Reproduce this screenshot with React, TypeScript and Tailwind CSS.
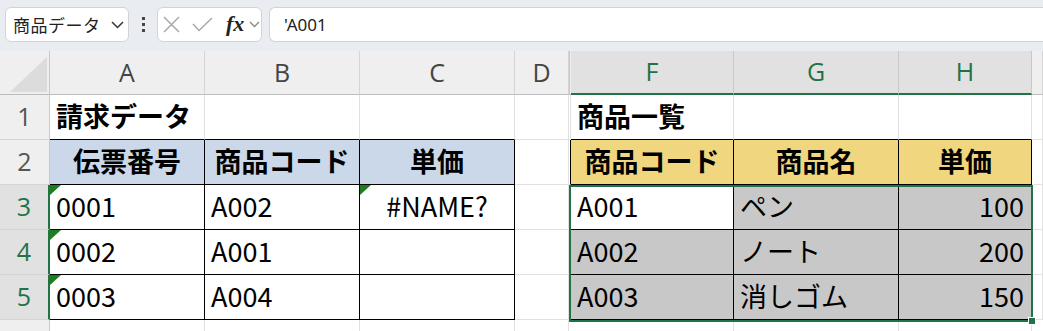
import type { ReactNode } from "react";

// one spreadsheet cell
function Cell({ className = "", children, tri }: { className?: string; children?: ReactNode; tri?: boolean }) {
  return (
    <div
      className={
        "relative flex items-center box-border border-r border-b px-[6px] pb-[4px] leading-[39px] text-[27px] text-black whitespace-nowrap overflow-hidden " +
        className
      }
    >
      {tri && (
        <svg className="absolute left-0 top-0" width="11" height="10" viewBox="0 0 11 10">
          <polygon points="0,0 11,0 0,10" fill="#1f7d1f" />
        </svg>
      )}
      {children}
    </div>
  );
}

// thin filler cells (hidden column E and the cut-off column on the right)
function Thin({ className = "" }: { className?: string }) {
  return <div className={"box-border border-r border-b " + className} />;
}

function ColHead({ label, sel, className = "" }: { label?: string; sel?: boolean; className?: string }) {
  return (
    <div
      className={
        "flex items-center justify-center box-border font-['Open_Sans',sans-serif] text-[25px] " +
        (sel
          ? "bg-[#e1e1e1] text-[#217346] border-r border-r-[#c8c8c8] border-b-2 border-b-[#217346] "
          : "bg-[#efefef] text-[#444] border-r border-r-[#d4d4d4] border-b border-b-[#bdbdbd] ") +
        className
      }
    >
      {label}
    </div>
  );
}

function RowHead({ label, sel }: { label?: string; sel?: boolean }) {
  return (
    <div
      className={
        "flex items-center justify-center box-border border-b border-b-[#d4d4d4] font-['Open_Sans',sans-serif] text-[25px] " +
        (sel
          ? "bg-[#e1e1e1] text-[#217346] border-r-2 border-r-[#217346]"
          : "bg-[#efefef] text-[#555] border-r border-r-[#c8c8c8]")
      }
    >
      {label}
    </div>
  );
}

const grid = "border-r-[#e1e1e1] border-b-[#e1e1e1]";
const blk = "border-r-black border-b-black";

export default function App() {
  return (
    <div className="w-[1043px] h-[331px] overflow-hidden bg-white font-['Noto_Sans_CJK_JP',sans-serif]">
      {/* Toolbar */}
      <div className="h-[51px] bg-[#e9ecf0] flex items-start pt-[7px]">
        <div className="ml-[5px] w-[124px] h-[35px] bg-white border border-[#d3d3d3] rounded-[6px] flex items-center justify-between pl-[7px] pr-[4px]">
          <span className="text-[17px] text-[#222] tracking-[0.5px]">商品データ</span>
          <svg width="13" height="8" viewBox="0 0 13 8">
            <polyline points="1,1 6.5,6.5 12,1" fill="none" stroke="#333" strokeWidth="1.5" />
          </svg>
        </div>
        <div className="w-[28px] h-[35px] flex flex-col items-center justify-center gap-[3px]">
          <div className="w-[3px] h-[3px] bg-[#444]" />
          <div className="w-[3px] h-[3px] bg-[#444]" />
          <div className="w-[3px] h-[3px] bg-[#444]" />
        </div>
        <div className="w-[105px] h-[35px] bg-white border border-[#d3d3d3] rounded-[6px] flex items-center pl-[5px]">
          <svg width="17" height="17" viewBox="0 0 17 17">
            <path d="M1 1 L16 16 M16 1 L1 16" stroke="#a9a9a9" strokeWidth="1.5" fill="none" />
          </svg>
          <svg className="ml-[12px]" width="21" height="15" viewBox="0 0 21 15">
            <polyline points="1,7 7,13.5 20,1" fill="none" stroke="#a9a9a9" strokeWidth="1.5" />
          </svg>
          <span className="ml-[13px] font-['Liberation_Serif',serif] italic font-bold text-[22px] leading-none text-[#222] pb-[2px]">fx</span>
          <svg className="ml-[5px]" width="11" height="7" viewBox="0 0 11 7">
            <polyline points="1,1 5.5,5.5 10,1" fill="none" stroke="#888" strokeWidth="1.3" />
          </svg>
        </div>
        <div className="ml-[7px] flex-1 h-[35px] bg-white border border-r-0 border-[#d3d3d3] rounded-l-[6px] flex items-center pl-[14px]">
          <span className="font-['Noto_Sans',sans-serif] text-[17px] text-[#222]">'A001</span>
        </div>
      </div>

      {/* Sheet */}
      <div className="relative grid grid-cols-[50px_155px_155px_155px_54px_2px_163px_165px_133px_11px] grid-rows-[44px_45px_45px_45px_45px_45px_11px]">
        {/* header row */}
        <div className="relative box-border bg-[#efefef] border-r border-r-[#c8c8c8] border-b border-b-[#bdbdbd]">
          <svg className="absolute left-[10px] top-[6px]" width="37" height="35" viewBox="0 0 37 35">
            <polygon points="0,35 37,35 37,0" fill="#dcdcdc" />
          </svg>
        </div>
        <ColHead label="A" />
        <ColHead label="B" />
        <ColHead label="C" />
        <ColHead label="D" />
        <div className="box-border bg-[#efefef] border-l border-l-[#c8c8c8] border-b border-b-[#bdbdbd]" />
        <ColHead label="F" sel />
        <ColHead label="G" sel />
        <ColHead label="H" sel />
        <ColHead />

        {/* row 1 */}
        <RowHead label="1" />
        <Cell className="font-bold border-r-[#e1e1e1] border-b-black">請求データ</Cell>
        <Cell className="border-r-[#e1e1e1] border-b-black" />
        <Cell className="border-r-[#e1e1e1] border-b-black" />
        <Cell className={grid} />
        <Thin className={grid} />
        <Cell className="font-bold border-r-[#e1e1e1] border-b-black">商品一覧</Cell>
        <Cell className="border-r-[#e1e1e1] border-b-black" />
        <Cell className="border-r-[#e1e1e1] border-b-black" />
        <Thin className={grid} />

        {/* row 2 */}
        <RowHead label="2" />
        <Cell className={"bg-[#cbd8e9] font-bold justify-center " + blk}>伝票番号</Cell>
        <Cell className={"bg-[#cbd8e9] font-bold justify-center " + blk}>商品コード</Cell>
        <Cell className={"bg-[#cbd8e9] font-bold justify-center " + blk}>単価</Cell>
        <Cell className={grid} />
        <Thin className="border-r-black border-b-[#e1e1e1]" />
        <Cell className={"bg-[#f0d67f] font-bold justify-center " + blk}>商品コード</Cell>
        <Cell className={"bg-[#f0d67f] font-bold justify-center " + blk}>商品名</Cell>
        <Cell className={"bg-[#f0d67f] font-bold justify-center " + blk}>単価</Cell>
        <Thin className={grid} />

        {/* row 3 */}
        <RowHead label="3" sel />
        <Cell className={blk} tri>0001</Cell>
        <Cell className={blk}>A002</Cell>
        <Cell className={"justify-center " + blk} tri>#NAME?</Cell>
        <Cell className={grid} />
        <Thin className="border-r-black border-b-[#e1e1e1]" />
        <Cell className={blk}>A001</Cell>
        <Cell className={"bg-[#c8c8c8] " + blk}>ペン</Cell>
        <Cell className={"bg-[#c8c8c8] justify-end pr-[7px] " + blk}>100</Cell>
        <Thin className={grid} />

        {/* row 4 */}
        <RowHead label="4" sel />
        <Cell className={blk} tri>0002</Cell>
        <Cell className={blk}>A001</Cell>
        <Cell className={blk} />
        <Cell className={grid} />
        <Thin className="border-r-black border-b-[#e1e1e1]" />
        <Cell className={"bg-[#c8c8c8] " + blk}>A002</Cell>
        <Cell className={"bg-[#c8c8c8] " + blk}>ノート</Cell>
        <Cell className={"bg-[#c8c8c8] justify-end pr-[7px] " + blk}>200</Cell>
        <Thin className={grid} />

        {/* row 5 */}
        <RowHead label="5" sel />
        <Cell className={blk} tri>0003</Cell>
        <Cell className={blk}>A004</Cell>
        <Cell className={blk} />
        <Cell className={grid} />
        <Thin className="border-r-black border-b-[#e1e1e1]" />
        <Cell className={"bg-[#c8c8c8] " + blk}>A003</Cell>
        <Cell className={"bg-[#c8c8c8] " + blk}>消しゴム</Cell>
        <Cell className={"bg-[#c8c8c8] justify-end pr-[7px] " + blk}>150</Cell>
        <Thin className={grid} />

        {/* row 6 (cut off) */}
        <div className="box-border bg-[#efefef] border-r border-r-[#c8c8c8]" />
        <div className="box-border border-r border-r-[#e1e1e1]" />
        <div className="box-border border-r border-r-[#e1e1e1]" />
        <div className="box-border border-r border-r-[#e1e1e1]" />
        <div className="box-border border-r border-r-[#e1e1e1]" />
        <div />
        <div className="box-border border-r border-r-[#e1e1e1]" />
        <div className="box-border border-r border-r-[#e1e1e1]" />
        <div className="box-border border-r border-r-[#e1e1e1]" />
        <div />

        {/* selection F3:H5 */}
        <div className="absolute left-[569px] top-[134px] w-[464px] h-[137px] box-border border-2 border-[#217346] pointer-events-none">
          <div className="absolute -right-[5px] -bottom-[5px] w-[8px] h-[8px] bg-[#217346] border border-white" />
        </div>
      </div>
    </div>
  );
}
